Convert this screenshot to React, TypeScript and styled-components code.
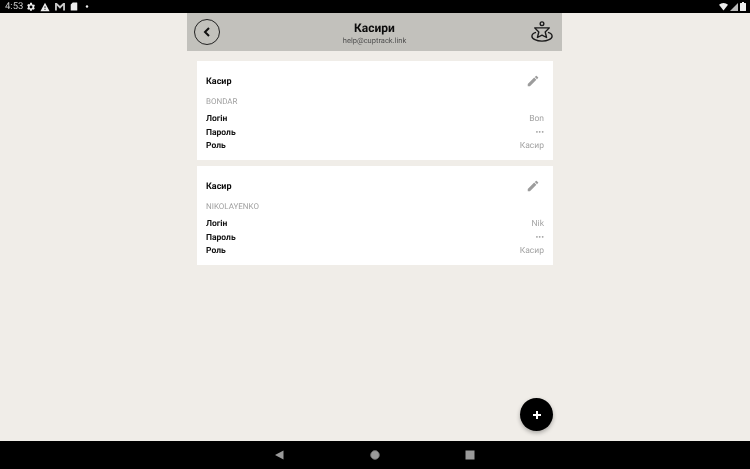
import React from 'react'
import styled, { createGlobalStyle } from 'styled-components';

const GlobalStyle = createGlobalStyle`
    html, body {
        margin: 0;
        padding: 0;
        background: #f0ede8;
        font-family: "Roboto", "Liberation Sans", sans-serif;
        text-rendering: geometricPrecision;
    }
`;

const Screen = styled.div`
    width: 750px;
    height: 469px;
    display: flex;
    flex-direction: column;
    overflow: hidden;
    position: relative;
    will-change: transform;
`;

const StatusBar = styled.div`
    height: 13px;
    background: #000;
    color: #e6e6e6;
    display: flex;
    align-items: center;
    justify-content: space-between;
    padding: 0 4px 0 5px;
    flex: none;
`;

const StatusLeft = styled.div`
    display: flex;
    align-items: center;
    gap: 4px;
`;

const StatusRight = styled.div`
    display: flex;
    align-items: center;
    gap: 2px;
`;

const Clock = styled.span`
    font-size: 9.5px;
    margin-right: -1px;
    color: #cfcfcf;
`;

const Main = styled.main`
    flex: 1;
    min-height: 0;
    display: flex;
    flex-direction: column;
    align-items: flex-start;
    padding-left: 187px;
`;

const Header = styled.header`
    width: 375px;
    height: 38px;
    background: #c2c1bc;
    display: flex;
    align-items: center;
    justify-content: space-between;
    padding: 0 9px 0 7px;
    box-sizing: border-box;
    position: relative;
    flex: none;
`;

const BackButton = styled.button`
    width: 26px;
    height: 26px;
    border-radius: 50%;
    border: 1px solid #222;
    background: transparent;
    padding: 0;
    display: flex;
    align-items: center;
    justify-content: center;
`;

const Titles = styled.div`
    position: absolute;
    left: 0;
    right: 0;
    top: 8px;
    display: flex;
    flex-direction: column;
    align-items: center;
`;

const Title = styled.div`
    font-size: 12px;
    line-height: 14px;
    font-weight: 700;
    color: #0c0c0c;
`;

const Subtitle = styled.div`
    font-size: 7.5px;
    line-height: 12px;
    color: #505050;
`;

const List = styled.div`
    width: 356px;
    margin: 9.5px 0 0 10px;
    display: flex;
    flex-direction: column;
    gap: 6px;
`;

const Card = styled.section`
    height: 99px;
    background: #fff;
    box-sizing: border-box;
    padding: 0 9px;
    display: flex;
    flex-direction: column;
`;

const CardHead = styled.div`
    height: 35px;
    padding-top: 6px;
    box-sizing: border-box;
    display: flex;
    align-items: center;
    justify-content: space-between;
`;

const CardTitle = styled.div`
    font-size: 9px;
    line-height: 12px;
    padding-top: 1px;
    font-weight: 700;
    color: #0c0c0c;
`;

const EditButton = styled.span`
    width: 14px;
    height: 14px;
    margin-right: 4px;
    display: flex;
`;

const CardName = styled.div`
    font-size: 8px;
    line-height: 12px;
    color: #a0a0a0;
    margin-bottom: 5px;
`;

const Row = styled.div`
    height: 13.5px;
    display: flex;
    align-items: center;
    justify-content: space-between;
`;

const RowLabel = styled.span`
    font-size: 8.5px;
    font-weight: 700;
    color: #111;
`;

const RowValue = styled.span`
    font-size: 8.5px;
    color: #a3a3a3;
`;

const Fab = styled.button`
    position: absolute;
    left: 520px;
    top: 398px;
    width: 33px;
    height: 33px;
    border-radius: 50%;
    border: none;
    padding: 0;
    background: #000;
    box-shadow: 0 2px 4px rgba(0, 0, 0, 0.3);
    display: flex;
    align-items: center;
    justify-content: center;
`;

const NavBar = styled.nav`
    height: 28px;
    background: #000;
    flex: none;
    display: flex;
    align-items: center;
    justify-content: center;
    gap: 85px;
`;

const NavIcon = styled.svg`
    width: 10px;
    height: 10px;
    display: block;
`;

const cashiers = [
    { name: 'BONDAR', login: 'Bon' },
    { name: 'NIKOLAYENKO', login: 'Nik' },
];

const App: React.FC = () => {
    return (
        <Screen>
            <GlobalStyle />
            <StatusBar>
                <StatusLeft>
                    <Clock>4:53</Clock>
                    <svg width="10" height="10" viewBox="0 0 24 24" fill="#eee">
                        <path d="M19.4 13a7.5 7.5 0 0 0 0-2l2.2-1.7-2.1-3.6-2.6 1a7.5 7.5 0 0 0-1.8-1L14.2 2H9.8l-.4 2.7a7.5 7.5 0 0 0-1.8 1l-2.6-1-2.1 3.6L5 11a7.5 7.5 0 0 0 0 2l-2.2 1.7 2.1 3.6 2.6-1a7.5 7.5 0 0 0 1.8 1l.4 2.7h4.4l.4-2.7a7.5 7.5 0 0 0 1.8-1l2.6 1 2.1-3.6zM12 15.5a3.5 3.5 0 1 1 0-7 3.5 3.5 0 0 1 0 7z" />
                    </svg>
                    <svg width="10" height="10" viewBox="0 0 24 24" fill="#eee">
                        <path d="M12 2 1 22h22zm1 17h-2v-2h2zm0-4h-2v-5h2z" />
                    </svg>
                    <svg width="12" height="9" viewBox="0 0 24 20" fill="#ccc">
                        <path d="M1 2h4l7 7 7-7h4v17h-4V8l-7 7-7-7v11H1z" />
                    </svg>
                    <svg width="8" height="9" viewBox="0 0 18 22" fill="#eee">
                        <path d="M6 1h10a1 1 0 0 1 1 1v18a1 1 0 0 1-1 1H2a1 1 0 0 1-1-1V6z" />
                    </svg>
                    <svg width="10" height="9" viewBox="0 0 10 8" fill="#eee">
                        <circle cx="5" cy="4" r="1.2" />
                    </svg>
                </StatusLeft>
                <StatusRight>
                    <svg width="9" height="8" viewBox="0 0 20 16" fill="#eee">
                        <path d="M0 3a15 15 0 0 1 20 0L10 16z" />
                    </svg>
                    <svg width="8" height="8" viewBox="0 0 16 16" fill="#bbb">
                        <path d="M16 0v16H0z" />
                    </svg>
                    <svg width="6" height="9" viewBox="0 0 12 18" fill="#eee">
                        <path d="M4 0h4v2h3a1 1 0 0 1 1 1v14a1 1 0 0 1-1 1H1a1 1 0 0 1-1-1V3a1 1 0 0 1 1-1h3z" />
                    </svg>
                </StatusRight>
            </StatusBar>

            <Main>
                <Header>
                    <BackButton aria-label="back">
                        <svg width="12" height="12" viewBox="0 0 12 12" fill="none" stroke="#111" strokeWidth="2">
                            <path d="M8 2 4 6l4 4" />
                        </svg>
                    </BackButton>
                    <Titles>
                        <Title>Касири</Title>
                        <Subtitle>help@cuptrack.link</Subtitle>
                    </Titles>
                    <svg width="22" height="22" viewBox="0 0 24 24" fill="none" stroke="#1a1a1a" strokeWidth="1.5" strokeLinejoin="round">
                        <circle cx="12" cy="3" r="2" />
                        <path d="M4 7.500h16l-4.500 4.500 1.500 6-5-2.500L7 18l1.500-6z" />
                        <path d="M5.500 12.500C2 13.500 1 15 1 16.500c0 3 5 5.500 11 5.500s11-2.500 11-5.500c0-1.500-1-3-4.500-4" />
                    </svg>
                </Header>

                <List>
                    {cashiers.map((c) => (
                        <Card key={c.name}>
                            <CardHead>
                                <CardTitle>Касир</CardTitle>
                                <EditButton>
                                    <svg width="14" height="14" viewBox="0 0 24 24" fill="#9c9c9c">
                                        <path d="M3 17.250V21h3.750L17.810 9.940l-3.750-3.750L3 17.250zM20.710 7.040a1 1 0 0 0 0-1.410l-2.340-2.340a1 1 0 0 0-1.410 0l-1.830 1.830 3.750 3.750 1.830-1.830z" />
                                    </svg>
                                </EditButton>
                            </CardHead>
                            <CardName>{c.name}</CardName>
                            <Row>
                                <RowLabel>Логін</RowLabel>
                                <RowValue>{c.login}</RowValue>
                            </Row>
                            <Row>
                                <RowLabel>Пароль</RowLabel>
                                <RowValue>•••</RowValue>
                            </Row>
                            <Row>
                                <RowLabel>Роль</RowLabel>
                                <RowValue>Касир</RowValue>
                            </Row>
                        </Card>
                    ))}
                </List>
            </Main>

            <Fab aria-label="add">
                <svg width="10" height="10" viewBox="0 0 10 10" fill="none" stroke="#fff" strokeWidth="2">
                    <path d="M5 1v8M1 5h8" />
                </svg>
            </Fab>

            <NavBar>
                <NavIcon viewBox="0 0 10 10" fill="#9a9a9a">
                    <path d="M0 5 8.500.5v9z" />
                </NavIcon>
                <NavIcon viewBox="0 0 10 10" fill="#9a9a9a" stroke="#666" strokeWidth="0.8">
                    <circle cx="5" cy="5" r="4.400" />
                </NavIcon>
                <NavIcon viewBox="0 0 10 10" fill="#9a9a9a">
                    <rect x="0.500" y="0.500" width="9" height="9" />
                </NavIcon>
            </NavBar>
        </Screen>
    );
};

export default App;
